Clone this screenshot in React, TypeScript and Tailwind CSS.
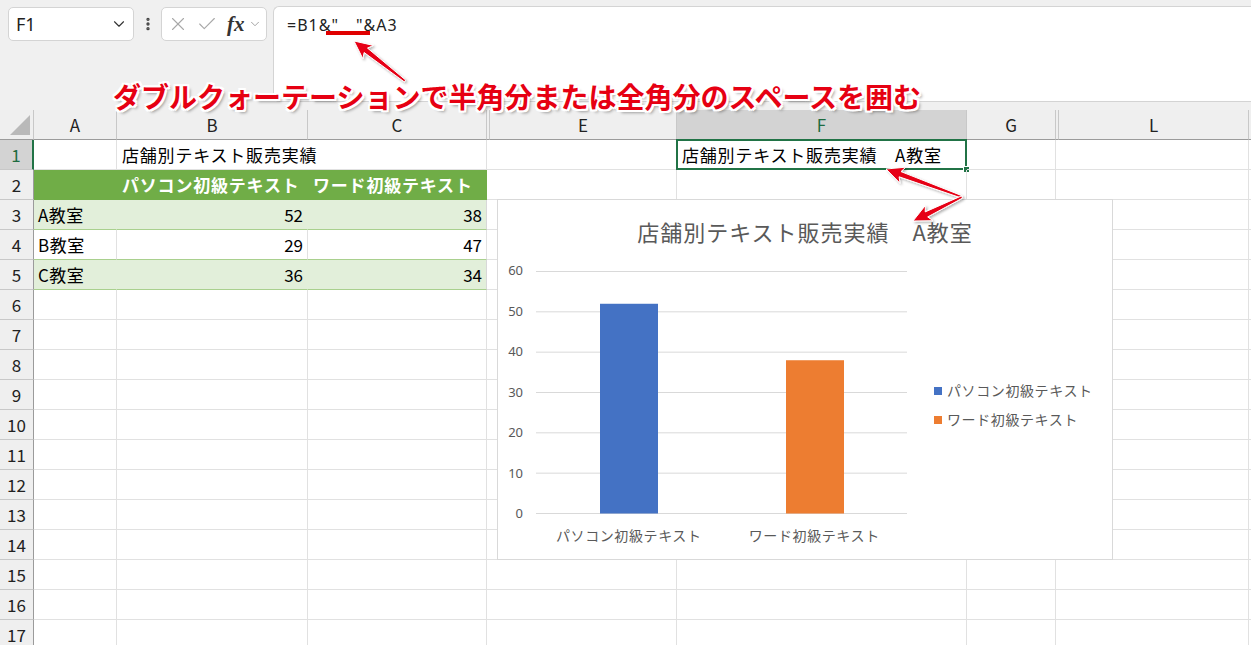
import React from 'react';
import { ChevronDown, EllipsisVertical, X, Check } from 'lucide-react';

type Col = { k: string; w: string; hidden?: boolean };
const COLS: Col[] = [
  { k: 'A', w: 'w-[83px]' },
  { k: 'B', w: 'w-[191px]' },
  { k: 'C', w: 'w-[179px]' },
  { k: 'D', w: 'w-[3px]', hidden: true },
  { k: 'E', w: 'w-[187px]' },
  { k: 'F', w: 'w-[290px]' },
  { k: 'G', w: 'w-[89px]' },
  { k: 'H', w: 'w-[3px]', hidden: true },
  { k: 'L', w: 'w-[190px]' },
];

const ROWS = Array.from({ length: 17 }, (_, i) => i + 1);

const DATA: Record<number, { name: string; pc: number; word: number }> = {
  3: { name: 'A教室', pc: 52, word: 38 },
  4: { name: 'B教室', pc: 29, word: 47 },
  5: { name: 'C教室', pc: 36, word: 34 },
};

function arrowPoints(x1: number, y1: number, x2: number, y2: number) {
  const dx = x2 - x1;
  const dy = y2 - y1;
  const L = Math.hypot(dx, dy);
  const ux = dx / L;
  const uy = dy / L;
  const nx = -uy;
  const ny = ux;
  const hl = 18;
  const hw = 8.5;
  const s0 = 1.2;
  const s1 = 2.8;
  const bx = x2 - ux * hl;
  const by = y2 - uy * hl;
  const nb = 3;
  const pts = [
    [x1 + nx * s0, y1 + ny * s0],
    [bx + ux * nb + nx * s1, by + uy * nb + ny * s1],
    [bx + nx * hw, by + ny * hw],
    [x2, y2],
    [bx - nx * hw, by - ny * hw],
    [bx + ux * nb - nx * s1, by + uy * nb - ny * s1],
    [x1 - nx * s0, y1 - ny * s0],
  ];
  return pts.map((p) => `${p[0].toFixed(1)},${p[1].toFixed(1)}`).join(' ');
}

function BodyCell({ r, col }: { r: number; col: Col }) {
  const c = col.k;
  const inTable = r >= 2 && r <= 5 && (c === 'A' || c === 'B' || c === 'C');
  let cls = 'border-r border-b border-[#e1e1e1]';
  if (col.hidden) cls = 'border-b border-[#e1e1e1]';
  else if (r === 2 && inTable) cls = 'bg-[#70ad47] border-r border-b border-[#70ad47]';
  else if ((r === 3 || r === 5) && inTable)
    cls =
      c === 'C'
        ? 'bg-[#e2efda] border-r border-b border-r-[#d8d8d8] border-b-[#a9d08e]'
        : 'bg-[#e2efda] border-r border-b border-r-[#e2efda] border-b-[#a9d08e]';
  else if (r === 4 && inTable) cls = 'bg-white border-r border-b border-r-[#e1e1e1] border-b-[#a9d08e]';
  else if (r === 1 && c === 'B') cls = 'border-b border-[#e1e1e1]';

  let content: React.ReactNode = null;
  if (r === 1 && c === 'B') {
    content = <span className="pl-[5px] tracking-[0.8px] text-black">店舗別テキスト販売実績</span>;
  } else if (r === 1 && c === 'F') {
    content = (
      <>
        <span className="pl-[5px] tracking-[0.8px] text-black">店舗別テキスト販売実績　A教室</span>
        <div className="absolute left-[-1px] top-[-1px] right-[-1px] bottom-[-1px] border-2 border-[#217346]" />
        <div className="absolute right-[-4px] bottom-[-4px] w-[7px] h-[7px] bg-[#217346] border border-white" />
      </>
    );
  } else if (r === 2 && c === 'B') {
    content = <span className="pl-[5px] tracking-[0.8px] font-bold text-white">パソコン初級テキスト</span>;
  } else if (r === 2 && c === 'C') {
    content = <span className="pl-[5px] tracking-[0.8px] font-bold text-white">ワード初級テキスト</span>;
  } else if (DATA[r] && c === 'A') {
    content = <span className="pl-[4px] tracking-[0.5px] text-black">{DATA[r].name}</span>;
  } else if (DATA[r] && c === 'B') {
    content = <span className="ml-auto pr-[4px] text-black">{DATA[r].pc}</span>;
  } else if (DATA[r] && c === 'C') {
    content = <span className="ml-auto pr-[4px] text-black">{DATA[r].word}</span>;
  }

  return (
    <div className={`${col.w} ${cls} shrink-0 h-full relative flex items-center whitespace-nowrap overflow-visible`}>
      {content}
    </div>
  );
}

function Chart() {
  const ticks = [60, 50, 40, 30, 20, 10, 0];
  const H = 242;
  const y = (v: number) => 0.5 + H - (v * H) / 60;
  return (
    <div className="absolute left-[497px] top-[89px] w-[616px] h-[361px] bg-white border border-[#d9d9d9] flex flex-col">
      <div className="mt-[16px] h-[30px] leading-[30px] text-center text-[22px] tracking-[1px] text-[#595959]">
        店舗別テキスト販売実績　A教室
      </div>
      <div className="mt-[25px] flex">
        <div className="w-[25px] h-[243px] flex flex-col justify-between">
          {ticks.map((t) => (
            <div key={t} className="h-0 flex items-center justify-end text-[13px] text-[#595959] font-['Noto_Sans',sans-serif]">
              {t}
            </div>
          ))}
        </div>
        <div className="ml-[13px] w-[371px] flex flex-col">
          <svg width="371" height="243" className="block">
            {ticks.map((t) => (
              <line key={t} x1="0" x2="371" y1={y(t)} y2={y(t)} stroke="#d9d9d9" strokeWidth="1" />
            ))}
            <rect x="64" y={y(52)} width="58" height={(52 * H) / 60} fill="#4472c4" />
            <rect x="250" y={y(38)} width="58" height={(38 * H) / 60} fill="#ed7d31" />
          </svg>
          <div className="mt-[11px] flex text-[14px] tracking-[0.6px] text-[#595959] leading-[20px]">
            <div className="w-1/2 text-center">パソコン初級テキスト</div>
            <div className="w-1/2 text-center">ワード初級テキスト</div>
          </div>
        </div>
        <div className="ml-[27px] mt-[105px] flex flex-col text-[14px] tracking-[0.6px] text-[#595959]">
          <div className="h-[29px] flex items-center">
            <div className="w-[8px] h-[8px] bg-[#4472c4] mr-[5px]" />
            パソコン初級テキスト
          </div>
          <div className="h-[29px] flex items-center">
            <div className="w-[8px] h-[8px] bg-[#ed7d31] mr-[5px]" />
            ワード初級テキスト
          </div>
        </div>
      </div>
    </div>
  );
}

export default function App() {
  return (
    <div className="relative w-[1251px] h-[645px] overflow-hidden bg-white font-['Noto_Sans_CJK_JP','Noto_Sans',sans-serif]">
      {/* Top: name box + formula bar */}
      <div className="h-[110px] bg-[#f0f0f0] flex items-start pt-[7px] pl-[8px]">
        <div className="w-[126px] h-[34px] bg-white border border-[#d4d4d4] rounded-[5px] flex items-center justify-between pl-[7px] pr-[5px]">
          <span className="text-[18px] text-[#222] font-['Noto_Sans',sans-serif]">F1</span>
          <ChevronDown size={18} strokeWidth={1.5} color="#333" />
        </div>
        <div className="w-[27px] h-[34px] flex items-center justify-center">
          <EllipsisVertical size={16} strokeWidth={3} color="#444" />
        </div>
        <div className="w-[106px] h-[34px] bg-white border border-[#d4d4d4] rounded-[5px] flex items-center pl-[5px]">
          <X size={22} strokeWidth={1.2} color="#a8a8a8" />
          <Check size={22} strokeWidth={1.2} color="#a8a8a8" className="ml-[7px]" />
          <span className="ml-[9px] text-[21px] leading-none italic font-semibold text-[#333] font-['Liberation_Serif',serif]">fx</span>
          <ChevronDown size={14} strokeWidth={1.3} color="#888" className="ml-[3px]" />
        </div>
        <div className="ml-[6px] mt-[-1px] flex-1 h-[96px] bg-white border border-r-0 border-[#d4d4d4] rounded-l-[6px] pl-[13px] pt-[5px]">
          <span className="whitespace-pre text-[16px] leading-[22px] tracking-[1px] text-[#222] font-['Noto_Sans',sans-serif]">
            {'=B1&"\u3000"&A3'}
          </span>
        </div>
      </div>

      {/* Grid */}
      <div className="relative">
        {/* Column headers */}
        <div className="flex h-[30px] bg-[#efefef]">
          <div className="w-[34px] shrink-0 h-full border-r border-b border-r-[#c8c8c8] border-b-[#9b9b9b] relative">
            <svg width="34" height="30" className="absolute left-0 top-0">
              <polygon points="10,25 30,25 30,5" fill="#b9b9b9" />
            </svg>
          </div>
          {COLS.map((col) => (
            <div
              key={col.k}
              className={`${col.w} shrink-0 h-full border-r border-b border-r-[#c8c8c8] border-b-[#9b9b9b] flex items-center justify-center text-[17px] ${
                col.k === 'F' ? 'bg-[#d3d3d3] text-[#1e6b40]' : 'text-[#222]'
              }`}
            >
              {col.hidden ? '' : col.k}
            </div>
          ))}
          <div className="flex-1 h-full border-b border-[#9b9b9b]" />
        </div>

        {/* Rows */}
        {ROWS.map((r) => (
          <div key={r} className="flex h-[30px] text-[17px] leading-[24px]">
            <div
              className={`w-[34px] shrink-0 h-full flex items-center justify-center border-b border-b-[#c8c8c8] ${
                r === 1
                  ? 'bg-[#d3d3d3] text-[#1e6b40] border-r-2 border-r-[#217346]'
                  : 'bg-[#efefef] text-[#222] border-r border-r-[#9b9b9b]'
              }`}
            >
              {r}
            </div>
            {COLS.map((col) => (
              <BodyCell key={col.k} r={r} col={col} />
            ))}
            <div className="flex-1 h-full border-b border-[#e1e1e1]" />
          </div>
        ))}

        <Chart />
      </div>

      {/* Annotation overlay */}
      <div className="absolute left-[113px] top-[79px] text-[28px] leading-[34px] font-bold text-[#e60012] whitespace-nowrap [text-shadow:2px_0_0_#fff,-2px_0_0_#fff,0_2px_0_#fff,0_-2px_0_#fff,2px_2px_0_#fff,-2px_-2px_0_#fff,2px_-2px_0_#fff,-2px_2px_0_#fff,3px_3px_3px_rgba(0,0,0,0.35)]">
        ダブルクォーテーションで半角分または全角分のスペースを囲む
      </div>

      <svg width="1251" height="645" className="absolute left-0 top-0 pointer-events-none">
        <defs>
          <filter id="sh" x="-20%" y="-20%" width="140%" height="140%">
            <feDropShadow dx="1.5" dy="1.5" stdDeviation="1.2" floodColor="#000" floodOpacity="0.3" />
          </filter>
        </defs>
        <rect x="326" y="31" width="44" height="4" fill="#e00000" />
        <g filter="url(#sh)" fill="#e60012" stroke="#fff" strokeWidth="1">
          <polygon points={arrowPoints(405, 81, 354, 41)} />
          <polygon points={arrowPoints(962, 197, 886, 169)} />
          <polygon points={arrowPoints(962, 197, 913, 221)} />
        </g>
      </svg>
    </div>
  );
}
